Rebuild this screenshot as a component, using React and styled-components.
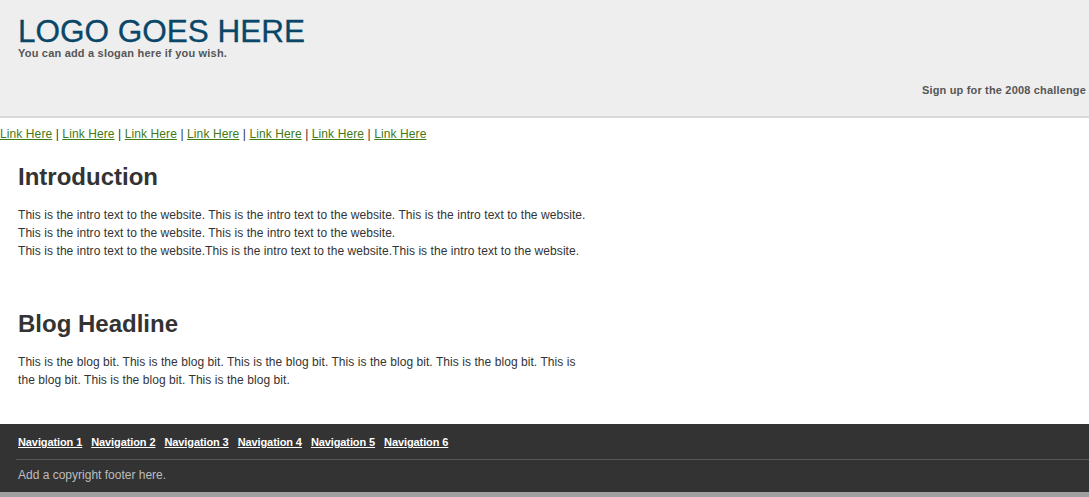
import React from 'react';
import styled, { createGlobalStyle } from 'styled-components';

const GlobalStyle = createGlobalStyle`
    html, body {
        margin: 0;
        padding: 0;
        background: #a0a0a0;
    }
    body {
        font-family: "Liberation Sans", Arial, sans-serif;
    }
`;

const Page = styled.div`
    background: #ffffff;
`;

const Header = styled.header`
    box-sizing: border-box;
    height: 118px;
    padding: 16px 3px 0 18px;
    background: #eeeeee;
    border-bottom: 2px solid #d8d8d8;
    display: flex;
    flex-direction: column;
`;

const Logo = styled.h1`
    margin: 0;
    font-size: 31.5px;
    line-height: 31px;
    font-weight: normal;
    color: #094668;
    -webkit-text-stroke: 0.3px #094668;
`;

const Slogan = styled.p`
    margin: 0;
    font-size: 11px;
    line-height: 13px;
    font-weight: bold;
    letter-spacing: 0.2px;
    color: #565656;
`;

const SignUp = styled.a`
    align-self: flex-end;
    margin-top: 24px;
    font-size: 11px;
    line-height: 13px;
    font-weight: bold;
    letter-spacing: 0.17px;
    color: #565656;
    text-decoration: none;
`;

const TopNav = styled.nav`
    padding-top: 7px;
    font-size: 12px;
    line-height: 18px;
    letter-spacing: 0.1px;
    color: #333333;
`;

const TopLink = styled.a`
    color: #3f7a16;
    text-decoration: underline;
`;

const Main = styled.main`
    padding: 0 0 35px 18px;
    width: 572px;
`;

const Section = styled.section`
    & + & {
        margin-top: 50px;
    }
`;

const Heading = styled.h2`
    margin: 20px 0 15px;
    font-size: 24px;
    line-height: 28px;
    font-weight: bold;
    color: #333333;
`;

const Text = styled.p`
    margin: 0;
    font-size: 12px;
    line-height: 18px;
    letter-spacing: 0.06px;
    color: #333333;
`;

const Footer = styled.footer`
    background: #333333;
    padding: 12px 0 8px;
`;

const FooterNav = styled.nav`
    display: flex;
    gap: 9px;
    margin-left: 16px;
    padding: 0 0 10px 2px;
    border-bottom: 1px solid #575757;
`;

const FooterLink = styled.a`
    font-size: 11px;
    line-height: 13px;
    font-weight: bold;
    letter-spacing: -0.1px;
    color: #ffffff;
    text-decoration: underline;
`;

const Copyright = styled.p`
    margin: 0;
    padding: 6px 0 0 18px;
    font-size: 12px;
    line-height: 18px;
    color: #bdbdbd;
`;

const topLinks = Array(7).fill('Link Here');
const footerLinks = [1, 2, 3, 4, 5, 6].map(n => `Navigation ${n}`);

const intro = 'This is the intro text to the website.';
const blog = Array(8).fill('This is the blog bit.').join(' ');

const App = () => {
    return (
        <>
            <GlobalStyle />
            <Page>
                <Header>
                    <Logo>LOGO GOES HERE</Logo>
                    <Slogan>You can add a slogan here if you wish.</Slogan>
                    <SignUp href="#">Sign up for the 2008 challenge</SignUp>
                </Header>

                <TopNav>
                    {topLinks.map((label, i) => (
                        <React.Fragment key={i}>
                            {i > 0 && ' | '}
                            <TopLink href="#">{label}</TopLink>
                        </React.Fragment>
                    ))}
                </TopNav>

                <Main>
                    <Section>
                        <Heading>Introduction</Heading>
                        <Text>
                            {intro} {intro} {intro}<br />
                            {intro} {intro}<br />
                            {intro}{intro}{intro}
                        </Text>
                    </Section>
                    <Section>
                        <Heading>Blog Headline</Heading>
                        <Text>{blog}</Text>
                    </Section>
                </Main>

                <Footer>
                    <FooterNav>
                        {footerLinks.map(label => (
                            <FooterLink href="#" key={label}>{label}</FooterLink>
                        ))}
                    </FooterNav>
                    <Copyright>Add a copyright footer here.</Copyright>
                </Footer>
            </Page>
        </>
    );
};

export default App;
